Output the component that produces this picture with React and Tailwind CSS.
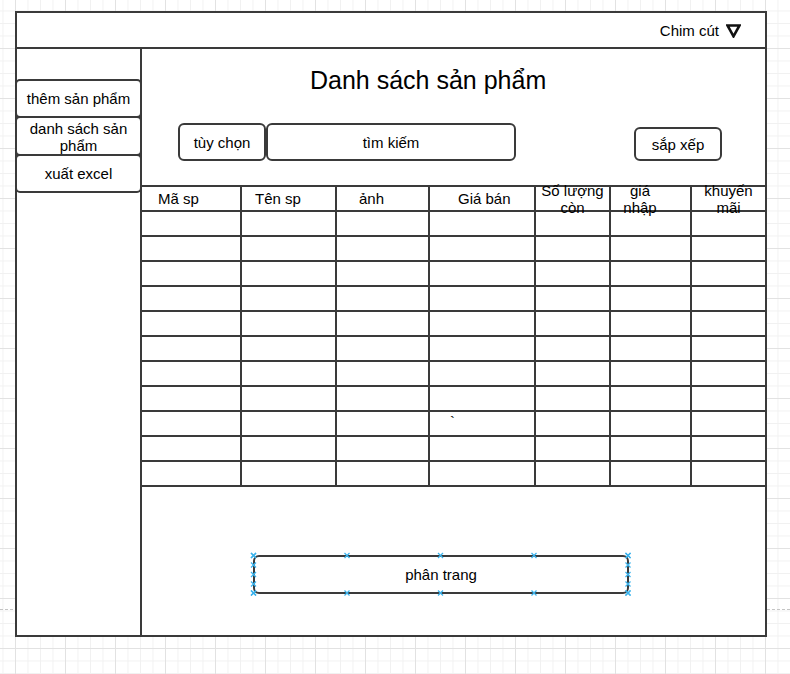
import React from 'react';

const LINE = 'border-[#3a3a3a]';

const cols = [
  { w: 'w-[100px]', label: ['Mã sp'], hcls: 'justify-start pl-[16px]' },
  { w: 'w-[95px]', label: ['Tên sp'], hcls: 'justify-start pl-[13px]' },
  { w: 'w-[93px]', label: ['ảnh'], hcls: 'justify-start pl-[22px]' },
  { w: 'w-[106px]', label: ['Giá bán'], hcls: 'justify-start pl-[28px]' },
  { w: 'w-[75px]', label: ['Số lượng', 'còn'], hcls: 'justify-center' },
  { w: 'w-[81px]', label: ['giá', 'nhập'], hcls: 'justify-center pr-[21px]' },
  { w: 'w-[73px]', label: ['khuyến', 'mãi'], hcls: 'justify-center' },
];

function Cross({ x, y }) {
  return (
    <g stroke="#3bb3ec" strokeWidth="1.3">
      <line x1={x - 2.5} y1={y - 2.5} x2={x + 2.5} y2={y + 2.5} />
      <line x1={x - 2.5} y1={y + 2.5} x2={x + 2.5} y2={y - 2.5} />
    </g>
  );
}

function Row({ header, index }) {
  return (
    <div className={`flex h-[25px] border-b-2 ${LINE}`}>
      {cols.map((c, i) => (
        <div
          key={i}
          className={`${c.w} shrink-0 h-full flex items-center ${i < cols.length - 1 ? 'border-r-2' : ''} ${LINE} ${header ? c.hcls : ''} text-[15px] leading-[17px]`}
        >
          {header ? (
            <div className="flex flex-col items-center whitespace-nowrap">
              {c.label.map((l, j) => (
                <span key={j}>{l}</span>
              ))}
            </div>
          ) : index === 8 && i === 3 ? (
            <span className="self-start pl-[20px] pt-[1px] text-[15px] leading-[17px]">`</span>
          ) : null}
        </div>
      ))}
    </div>
  );
}

export default function App() {
  const sideBtn = `relative -mx-[2px] border-2 ${LINE} rounded-[5px] bg-white flex items-center justify-center text-center text-[15px] leading-[17px]`;
  const box = `border-2 ${LINE} rounded-[6px] bg-white flex items-center justify-center text-[15px] leading-[17px]`;
  const xs = [0.5, 94, 187.5, 281, 375];
  const ys = [0.5, 10, 19.5, 29, 38];
  return (
    <div className="relative w-[790px] h-[674px] overflow-hidden bg-white pt-[11px] pl-[15px] text-black font-['Liberation_Sans',Arial,sans-serif] bg-[image:linear-gradient(to_right,#e2e2e2_1px,transparent_1px),linear-gradient(to_bottom,#e2e2e2_1px,transparent_1px),linear-gradient(to_right,#f1f1f1_1px,transparent_1px),linear-gradient(to_bottom,#f1f1f1_1px,transparent_1px)] bg-[size:50px_50px,50px_50px,12.5px_12.5px,12.5px_12.5px] bg-[position:15px_48px,15px_48px,2.5px_10.5px,2.5px_10.5px]">
      <div className="absolute left-0 right-0 top-[609px] border-t border-dashed border-[#c4c4c4]" />
      <div className={`relative w-[752px] h-[626px] border-2 ${LINE} bg-white flex flex-col`}>
        <div className={`h-[36px] shrink-0 border-b-2 ${LINE} flex items-center justify-end pr-[24px] gap-[7px] text-[15px]`}>
          <span className="mt-[2px]">Chim cút</span>
          <svg width="15" height="14" viewBox="0 0 15 14" className="mt-[1px]">
            <polygon points="1.5,1.5 13.5,1.5 7.5,12.3" fill="none" stroke="#111" strokeWidth="2.6" />
          </svg>
        </div>
        <div className="flex flex-1 min-h-0">
          <div className={`w-[125px] shrink-0 border-r-2 ${LINE} pt-[30px] flex flex-col`}>
            <div className={`${sideBtn} h-[39px]`}>thêm sản phẩm</div>
            <div className={`${sideBtn} h-[40px] -mt-[2px] pt-[1px]`}>danh sách sản<br />phẩm</div>
            <div className={`${sideBtn} h-[39px] -mt-[2px]`}>xuất excel</div>
          </div>
          <div className="flex-1 flex flex-col min-w-0">
            <div className="mt-[17px] pl-[168px] text-[25px] leading-[29px] whitespace-nowrap">Danh sách sản phẩm</div>
            <div className="mt-[28px] h-[38px] flex items-end pl-[36px]">
              <div className={`${box} w-[88px] h-[38px]`}>tùy chọn</div>
              <div className={`${box} w-[250px] h-[38px]`}>tìm kiếm</div>
              <div className={`${box} ml-[118px] w-[88px] h-[34px]`}>sắp xếp</div>
            </div>
            <div className={`mt-[24px] border-t-2 ${LINE}`}>
              <Row header />
              {Array.from({ length: 11 }).map((_, i) => (
                <Row key={i} index={i} />
              ))}
            </div>
            <div className={`relative ${box} mt-[68px] ml-[111px] w-[376px] h-[39px]`}>
              phân trang
              <svg className="absolute -left-[2px] -top-[2px] overflow-visible pointer-events-none" width="376" height="39">
                {xs.map((x) => (
                  <React.Fragment key={x}>
                    <Cross x={x} y={0.5} />
                    <Cross x={x} y={38} />
                  </React.Fragment>
                ))}
                {ys.map((y) => (
                  <React.Fragment key={y}>
                    <Cross x={0.5} y={y} />
                    <Cross x={375} y={y} />
                  </React.Fragment>
                ))}
              </svg>
            </div>
          </div>
        </div>
      </div>
    </div>
  );
}
